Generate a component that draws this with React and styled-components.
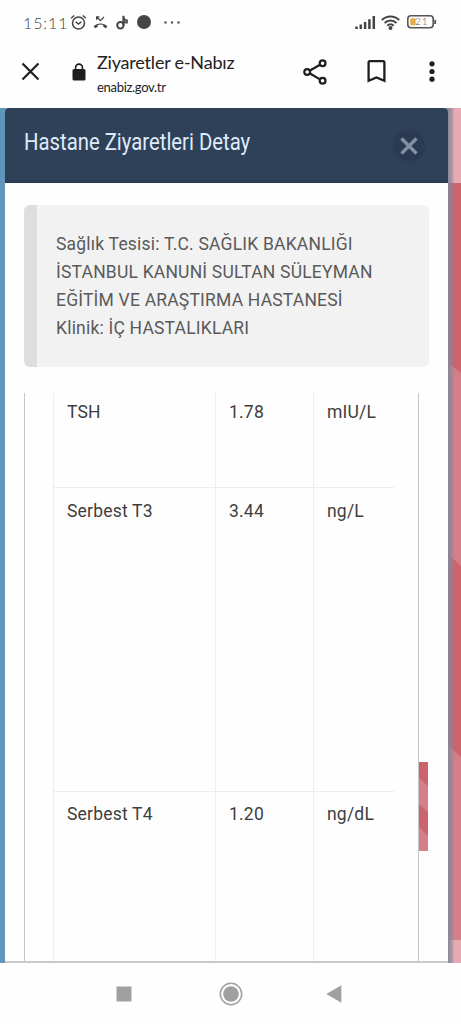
import styled, { createGlobalStyle } from "styled-components";

const GlobalStyle = createGlobalStyle`
  * {
    box-sizing: border-box;
  }

  body {
    margin: 0;
    background: #fefefe;
    font-family: Roboto, "Liberation Sans", sans-serif;
  }
`;

const Screen = styled.div`
  display: flex;
  flex-direction: column;
  width: 461px;
  height: 1024px;
  overflow: hidden;
  background: #fefefe;
`;

const StatusBar = styled.div`
  display: flex;
  flex: none;
  align-items: center;
  height: 44px;
  padding: 0 24px 0 23px;
`;

const Clock = styled.span`
  width: 47px;
  color: #444;
  font-family: Lato, sans-serif;
  font-size: 16px;
  font-weight: 300;
  letter-spacing: 0.9px;
  white-space: nowrap;
`;

const StatusIcon = styled.svg`
  display: block;
  flex: none;
  margin-left: ${({ $gap }) => $gap || 0}px;
`;

const Spacer = styled.div`
  flex: 1;
`;

const BrowserBar = styled.div`
  display: flex;
  flex: none;
  align-items: center;
  height: 64px;
  padding: 0 21px 9px;
`;

const BarIcon = styled.svg`
  display: block;
  flex: none;
  margin-left: ${({ $gap }) => $gap || 0}px;
`;

const PageInfo = styled.div`
  width: 195px;
  margin-left: 11px;
  padding-top: 3px;
  color: #222;
  font-family: Lato, sans-serif;
  white-space: nowrap;
`;

const PageTitle = styled.div`
  font-size: 18px;
  line-height: 23px;
  letter-spacing: -0.2px;
`;

const PageUrl = styled.div`
  height: 22px;
  font-size: 13px;
  line-height: 26px;
  letter-spacing: -0.3px;
`;

const Backdrop = styled.div`
  display: flex;
  flex: none;
  height: 855px;
  background: #5e97ba;
`;

const Modal = styled.div`
  display: flex;
  flex-direction: column;
  width: 443px;
  margin-left: 5px;
  border-radius: 4px 4px 0 0;
  border-bottom: 2px solid #c9c9cb;
  background: #fefefe;
`;

const ModalHeader = styled.div`
  display: flex;
  flex: none;
  justify-content: space-between;
  height: 75px;
  padding: 20px 21px 0 19px;
  border-bottom: 1px solid #273a52;
  border-radius: 4px 4px 0 0;
  background: #2f4159;
`;

const ModalTitle = styled.div`
  color: #dfebfa;
  font-size: 23.5px;
  line-height: 28px;
  white-space: nowrap;
  transform: scaleX(0.864);
  transform-origin: left;
`;

const CloseButton = styled.button`
  display: flex;
  align-items: center;
  justify-content: center;
  width: 36px;
  height: 36px;
  padding: 0;
  border: 0;
  border-radius: 50%;
  background: radial-gradient(#293a52 55%, #2f4159 72%);
`;

const ModalBody = styled.div`
  display: flex;
  flex: 1;
  flex-direction: column;
  min-height: 0;
  padding: 22px 19px 0;
`;

const InfoBox = styled.div`
  flex: none;
  height: 162px;
  padding: 25px 0 0 19px;
  border-left: 13px solid #dedede;
  border-radius: 6px;
  background: #f2f2f2;
  color: #5a5a5a;
  font-size: 17.5px;
  line-height: 28px;
  letter-spacing: 0.2px;
  white-space: nowrap;
`;

const ScrollArea = styled.div`
  display: flex;
  flex: 1;
  min-height: 0;
  margin-top: 26px;
`;

const TableFrame = styled.div`
  width: 395px;
  padding: 0 24px 0 28px;
  overflow: hidden;
  border: solid #c6c6c8;
  border-width: 0 1px;
`;

const Row = styled.div`
  display: grid;
  grid-template-columns: 162px 98px 1fr;
  height: ${({ $height }) => $height}px;
  border-bottom: 1px solid #e9eff1;
`;

const Cell = styled.div`
  padding: ${({ $top }) => $top}px 0 0 13px;
  border-left: 1px solid #e9eff1;
  color: #3e3e3e;
  font-size: 17.5px;
  line-height: 24px;
  letter-spacing: 0.2px;
`;

const ScrollTrack = styled.div`
  width: 9px;
  padding-top: 369px;
`;

const Stripes = styled.svg`
  display: block;
  flex: none;
`;

const NavBar = styled.div`
  display: flex;
  align-items: center;
  justify-content: space-between;
  height: 61px;
  padding: 0 119px 0 116px;
`;

const HomeIcon = styled.svg`
  margin-left: 3px;
`;

const results = [
  { name: "TSH", value: "1.78", unit: "mIU/L", height: 95, top: 7 },
  { name: "Serbest T3", value: "3.44", unit: "ng/L", height: 304, top: 11 },
  { name: "Serbest T4", value: "1.20", unit: "ng/dL", height: 190, top: 10 },
];

const facility = [
  "Sağlık Tesisi: T.C. SAĞLIK BAKANLIĞI",
  "İSTANBUL KANUNİ SULTAN SÜLEYMAN",
  "EĞİTİM VE ARAŞTIRMA HASTANESİ",
  "Klinik: İÇ HASTALIKLARI",
];

const PhoneStatus = () => (
  <StatusBar>
    <Clock>15:11</Clock>
    <StatusIcon width="17" height="17" viewBox="0 0 17 17" fill="none" stroke="#444" strokeWidth="1.5">
      <circle cx="8.5" cy="9" r="6" />
      <path d="M1 4.2 4.2 1.5M16 4.2 12.8 1.5M5.7 7.8 8.3 10l3-2.2" />
    </StatusIcon>
    <StatusIcon $gap={6} width="15" height="14" viewBox="0 0 15 14">
      <path d="M.5 11.5C4 7.4 11 7.4 14.5 11.5L12.6 13.3 10.3 11.8V10C8.5 9.3 6.5 9.3 4.7 10V11.8L2.4 13.3Z" fill="#444" />
      <path d="M3.6 4.8V1.8H6.4M3.8 2 7.4 5.6 11 2" fill="none" stroke="#444" strokeWidth="1.2" />
    </StatusIcon>
    <StatusIcon $gap={8} width="12" height="15" viewBox="0 0 12 15" fill="none" stroke="#444" strokeWidth="2">
      <circle cx="4.4" cy="10.2" r="3.2" />
      <path d="M7.4 10.5V.8M7.4 1.5C7.6 4 8.8 5.2 10.8 5.4V7.6C9.4 7.6 8.2 7.2 7.4 6.5" />
    </StatusIcon>
    <StatusIcon $gap={9} width="14" height="14" viewBox="0 0 14 14">
      <circle cx="7" cy="7" r="7" fill="#444" />
    </StatusIcon>
    <StatusIcon $gap={13} width="16" height="3" viewBox="0 0 16 3" fill="#555">
      <circle cx="1.5" cy="1.5" r="1.2" />
      <circle cx="8" cy="1.5" r="1.2" />
      <circle cx="14.5" cy="1.5" r="1.2" />
    </StatusIcon>
    <Spacer />
    <StatusIcon width="21" height="14" viewBox="0 0 21 14" stroke="#444" strokeWidth="2.5">
      <path d="M1.5 11.5V14M5.8 9.5V14M10.1 7V14M14.4 4.2V14M18.8 1V14" />
    </StatusIcon>
    <StatusIcon $gap={5} width="19" height="15" viewBox="0 0 19 15" fill="none" stroke="#444" strokeWidth="2">
      <path d="M.8 5C5.8.2 13.2.2 18.2 5M3.6 8c3.4-3.2 8.4-3.2 11.8 0M6.3 10.8c1.9-1.8 4.5-1.8 6.4 0" />
      <circle cx="9.5" cy="13" r="1" fill="#444" />
    </StatusIcon>
    <StatusIcon $gap={7} width="30" height="14" viewBox="0 0 30 14">
      <rect x=".8" y=".8" width="25.4" height="12" rx="3.2" fill="none" stroke="#555" strokeWidth="1.6" />
      <rect x="3.2" y="3.3" width="5.5" height="7" rx="1" fill="#e2ac48" />
      <path d="M28.2 4.8V9" stroke="#555" strokeWidth="1.8" />
      <text x="8" y="10.4" fill="#555" fontFamily="Lato, sans-serif" fontSize="10" fontWeight="300" letterSpacing="1">21</text>
    </StatusIcon>
  </StatusBar>
);

const BrowserToolbar = () => (
  <BrowserBar>
    <BarIcon width="19" height="19" viewBox="0 0 19 19" stroke="#1e1e1e" strokeWidth="2.2">
      <path d="M1.5 1.5 17.5 17.5M17.5 1.5 1.5 17.5" />
    </BarIcon>
    <BarIcon $gap={32} width="14" height="18" viewBox="0 0 14 18">
      <rect x=".5" y="6" width="13" height="11.5" rx="1.6" fill="#1e1e1e" />
      <path d="M3.6 7V4.5a3.4 3.4 0 0 1 6.8 0V7" fill="none" stroke="#1e1e1e" strokeWidth="1.6" />
    </BarIcon>
    <PageInfo>
      <PageTitle>Ziyaretler e-Nabız</PageTitle>
      <PageUrl>enabiz.gov.tr</PageUrl>
    </PageInfo>
    <BarIcon $gap={11} width="24" height="26" viewBox="0 0 24 26" fill="none" stroke="#1e1e1e" strokeWidth="2.2">
      <path d="M7 11.5 17 5.8M7 14.5 17 20.4" />
      <circle cx="4.2" cy="13" r="2.9" />
      <circle cx="19.6" cy="4.2" r="2.9" />
      <circle cx="19.6" cy="21.8" r="2.9" />
    </BarIcon>
    <BarIcon $gap={40} width="19" height="23" viewBox="0 0 19 23" fill="none" stroke="#1e1e1e" strokeWidth="2.3">
      <path d="M1.6 2.6Q1.6 1.2 3 1.2H16Q17.4 1.2 17.4 2.6V20.8L9.5 17.5 1.6 20.8Z" />
    </BarIcon>
    <BarIcon $gap={43} width="6" height="21" viewBox="0 0 6 21" fill="#1e1e1e">
      <circle cx="3" cy="2.8" r="2.6" />
      <circle cx="3" cy="10.5" r="2.6" />
      <circle cx="3" cy="18.2" r="2.6" />
    </BarIcon>
  </BrowserBar>
);

const BackdropPattern = () => (
  <Stripes width="13" height="855" viewBox="0 0 13 855">
    <defs>
      <linearGradient id="modalShadow">
        <stop offset="0" stopColor="#85879a" stopOpacity=".95" />
        <stop offset=".3" stopColor="#85879a" stopOpacity=".6" />
        <stop offset=".5" stopColor="#85879a" stopOpacity="0" />
      </linearGradient>
    </defs>
    <rect width="13" height="855" fill="#d4808a" />
    <rect width="13" height="75" fill="#e6abb2" />
    <path d="M0 75H13V265L0 255Z" fill="#cb646d" />
    <path d="M0 446 13 458V649L0 638Z" fill="#cb646d" />
    <rect y="832" width="13" height="23" fill="#e6abb2" />
    <rect width="13" height="855" fill="url(#modalShadow)" />
  </Stripes>
);

const App = () => {
  return (
    <>
      <GlobalStyle />
      <Screen>
        <PhoneStatus />
        <BrowserToolbar />
        <Backdrop>
          <Modal>
            <ModalHeader>
              <ModalTitle>Hastane Ziyaretleri Detay</ModalTitle>
              <CloseButton aria-label="Kapat">
                <svg width="18" height="18" viewBox="0 0 18 18" stroke="#8290a1" strokeWidth="3.4">
                  <path d="M1.5 1.5 16.5 16.5M16.5 1.5 1.5 16.5" />
                </svg>
              </CloseButton>
            </ModalHeader>
            <ModalBody>
              <InfoBox>
                {facility.map((line) => (
                  <div key={line}>{line}</div>
                ))}
              </InfoBox>
              <ScrollArea>
                <TableFrame>
                  {results.map(({ name, value, unit, height, top }) => (
                    <Row key={name} $height={height}>
                      <Cell $top={top}>{name}</Cell>
                      <Cell $top={top}>{value}</Cell>
                      <Cell $top={top}>{unit}</Cell>
                    </Row>
                  ))}
                </TableFrame>
                <ScrollTrack>
                  <Stripes width="9" height="89" viewBox="0 0 9 89">
                    <rect width="9" height="89" fill="#d4808a" />
                    <path d="M0 0H9V24L0 16ZM0 42 9 50V74L0 65Z" fill="#cb646d" />
                  </Stripes>
                </ScrollTrack>
              </ScrollArea>
            </ModalBody>
          </Modal>
          <BackdropPattern />
        </Backdrop>
        <NavBar>
          <svg width="16" height="16" viewBox="0 0 16 16">
            <rect x=".5" y=".5" width="15" height="15" fill="#a0a0a0" />
          </svg>
          <HomeIcon width="24" height="24" viewBox="0 0 24 24">
            <circle cx="12" cy="12" r="10.7" fill="none" stroke="#a0a0a0" strokeWidth="1.5" />
            <circle cx="12" cy="12" r="7.8" fill="#a0a0a0" />
          </HomeIcon>
          <svg width="16" height="18" viewBox="0 0 16 18">
            <path d="M.3 9 15.4.3V17.7Z" fill="#a0a0a0" />
          </svg>
        </NavBar>
      </Screen>
    </>
  );
};

export default App;
